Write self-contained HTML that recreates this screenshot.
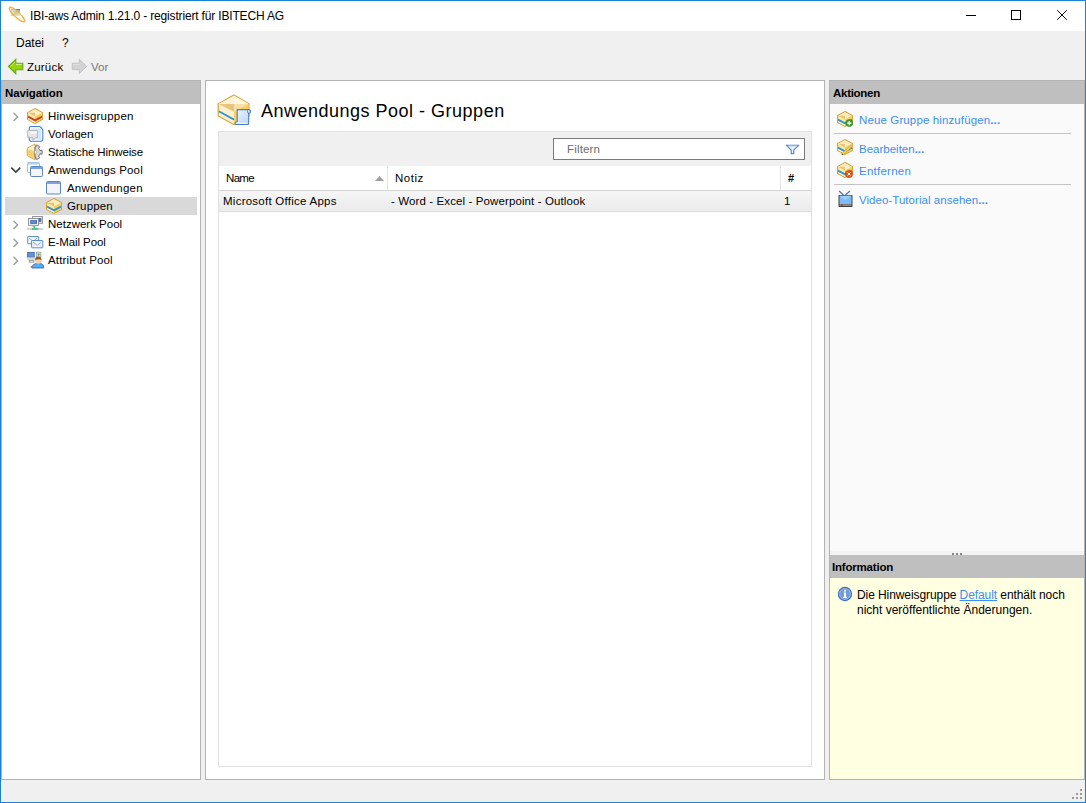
<!DOCTYPE html>
<html><head><meta charset="utf-8">
<style>
html,body{margin:0;padding:0;}
body{width:1086px;height:803px;position:relative;overflow:hidden;background:#f0f0f0;font-family:"Liberation Sans",sans-serif;color:#000;}
.a{position:absolute;display:block;}
.t{position:absolute;font-size:12px;line-height:15px;white-space:nowrap;}
.b{font-weight:bold;}
.lnk{color:#3a8ff5;}
</style></head><body>

<div class="a" style="left:0;top:0;width:1086px;height:1px;background:#1883d7"></div>
<div class="a" style="left:0;top:0;width:1px;height:803px;background:#1883d7"></div>
<div class="a" style="left:1085px;top:0;width:1px;height:803px;background:#1883d7"></div>
<div class="a" style="left:0;top:802px;width:1086px;height:1px;background:#1883d7"></div>
<div class="a" style="left:1px;top:1px;width:1084px;height:30px;background:#fff"></div>
<svg class="a" style="left:6px;top:4px" width="22" height="22" viewBox="0 0 22 22">
<defs><linearGradient id="sq" x1="0" y1="0" x2="0" y2="1"><stop offset="0" stop-color="#7d9fc6"/><stop offset="1" stop-color="#c9def3"/></linearGradient></defs>
<rect x="5" y="5" width="9" height="7" fill="url(#sq)"/>
<rect x="5" y="5" width="9" height="1" fill="#5f7fa6"/>
<path d="M7.8 11.5 L9.8 6.5 L11.8 11.5 M8.6 9.8 H11" fill="none" stroke="#a88512" stroke-width="1.2"/>
<ellipse cx="11" cy="10.6" rx="10.2" ry="2.7" transform="rotate(43 11 10.6)" fill="rgba(255,248,225,0.55)" stroke="#efb54c" stroke-width="1.3"/>
</svg>
<div class="t" style="left:30px;top:9px;font-size:12px;font-weight:400;color:#000;letter-spacing:-0.167px;">IBI-aws Admin 1.21.0 - registriert für IBITECH AG</div>
<div class="a" style="left:966px;top:15px;width:10px;height:1px;background:#000"></div>
<div class="a" style="left:1011px;top:10px;width:8px;height:8px;border:1px solid #000"></div>
<svg class="a" style="left:1056px;top:9px" width="12" height="12" viewBox="0 0 12 12"><path d="M1.2 1.2L10.8 10.8M10.8 1.2L1.2 10.8" stroke="#000" stroke-width="0.95"/></svg>
<div class="t" style="left:16px;top:36px;font-size:12px;font-weight:400;color:#000;letter-spacing:0.0px;">Datei</div>
<div class="t" style="left:62px;top:36px;font-size:12px;font-weight:400;color:#000;letter-spacing:0.0px;">?</div>
<svg class="a" style="left:6px;top:57px" width="19" height="19" viewBox="0 0 19 19">
<polygon points="2.5,9.5 9.8,2.3 9.8,6.3 16.8,6.3 16.8,12.8 9.8,12.8 9.8,16.7" fill="#97d40c" stroke="#66a812" stroke-width="1.1" stroke-linejoin="miter"/>
<path d="M10 7.4 H15.8" stroke="#d0f580" stroke-width="1"/><path d="M4.5 9.5 L9.2 4.8" stroke="#c0ee60" stroke-width="0.8"/>
</svg>
<div class="t" style="left:27px;top:60px;font-size:11.5px;font-weight:400;color:#000;letter-spacing:0.2px;">Zurück</div>
<svg class="a" style="left:70px;top:57px" width="19" height="19" viewBox="0 0 19 19">
<polygon points="16.6,9.4 9.3,2.2 9.3,6.2 2.3,6.2 2.3,12.6 9.3,12.6 9.3,16.6" fill="#d3d3d3" stroke="#c2c2c2" stroke-width="1"/><path d="M3.2 7.4 H9.8" stroke="#e2e2e2" stroke-width="0.9"/>
</svg>
<div class="t" style="left:91px;top:60px;font-size:11.5px;font-weight:400;color:#767676;letter-spacing:0.0px;">Vor</div>
<div class="a" style="left:1px;top:80px;width:198px;height:698px;border:1px solid #b3b3b3;background:#fff"></div>
<div class="a" style="left:2px;top:81px;width:198px;height:23px;background:#bfbfbf"></div>
<div class="t" style="left:5px;top:86px;font-size:11.5px;font-weight:700;color:#000;letter-spacing:-0.111px;">Navigation</div>
<div class="a" style="left:5px;top:197px;width:192px;height:18px;background:#d9d9d9"></div>
<svg class="a" style="left:11px;top:111px" width="10" height="12" viewBox="0 0 10 12"><path d="M2.5 1.8 L6.6 5.9 L2.5 10" fill="none" stroke="#a3a3a3" stroke-width="1.5"/></svg>
<svg class="a" style="left:27px;top:108px" width="16" height="16" viewBox="0 0 16 16"><polygon points="8,0.6 15.4,4.5 15.4,11.5 8,15.4 0.6,11.5 0.6,4.5" fill="#fde9a9" stroke="#d6a035" stroke-width="1.1"/><polygon points="8,1.2 14.8,4.8 8,8.4 1.2,4.8" fill="#fbeec4"/><polygon points="1.2,4.8 8,4.8 8,8.4" fill="#e9c471"/><polygon points="8,8.4 14.8,4.8 14.8,11.2 8,14.8" fill="#f6cf5a"/><polyline points="1.1,8.6 8,12.4 14.9,8.6" fill="none" stroke="#d73a28" stroke-width="1.8"/><polygon points="1.1,10 8,13.7 8,14.8 1.2,11.2" fill="#fdf3d0"/></svg>
<div class="t" style="left:48px;top:109px;font-size:11.5px;font-weight:400;color:#000;letter-spacing:0.231px;">Hinweisgruppen</div>
<svg class="a" style="left:26px;top:125px" width="18" height="18" viewBox="0 0 18 18">
<path d="M5 1.5 H13 Q14 1.5 15 2.5 L15.9 3.4 Q16.8 4.3 16.8 5.4 V14.6 Q16.8 16.3 15 16.3 H5 Q3.3 16.3 3.3 14.6 V3.2 Q3.3 1.5 5 1.5 Z" fill="#fff" stroke="#4581d2" stroke-width="1.1"/>
<rect x="5.2" y="3.4" width="9.8" height="11.2" fill="#d3e5fb"/>
<path d="M1.6 5.6 H11.4 V12.6 H9.6 L6.9 15.2 L6.9 12.6 H1.6 Z" fill="#e6e6e6" stroke="#b3b3b3" stroke-width="0.9"/>
<rect x="2.2" y="6.2" width="8.6" height="2.5" fill="#f3f3f3"/>
</svg>
<div class="t" style="left:48px;top:127px;font-size:11.5px;font-weight:400;color:#000;letter-spacing:0.0px;">Vorlagen</div>
<svg class="a" style="left:26px;top:143px" width="18" height="18" viewBox="0 0 18 18">
<polygon points="9,1 1.2,5.2 1.2,12.6 9,16.8" fill="#fbe7ae" stroke="#d9a844" stroke-width="1"/>
<polygon points="8.5,5 2,7.5 2,12 8.5,15.5" fill="#f4cf70"/>
<polygon points="8.5,2 2,5.6 8.5,8.5" fill="#fdf2d2"/>
<path d="M9 4.00 L9.00 4.00 L9.09 4.00 L9.18 4.00 L9.27 4.01 L9.36 4.01 L9.45 4.02 L9.54 4.03 L9.63 4.04 L9.72 4.05 L10.14 1.99 L10.27 2.01 L10.39 2.03 L10.52 2.06 L10.64 2.09 L10.77 2.12 L10.89 2.15 L11.01 2.18 L11.13 2.22 L11.26 2.26 L11.38 2.30 L11.50 2.34 L11.62 2.38 L11.73 2.43 L11.85 2.48 L11.97 2.53 L12.09 2.58 L12.20 2.64 L12.31 2.70 L12.43 2.75 L12.54 2.82 L12.65 2.88 L12.76 2.94 L12.87 3.01 L12.98 3.08 L13.08 3.15 L13.19 3.22 L13.29 3.29 L13.39 3.37 L13.49 3.45 L13.59 3.53 L13.69 3.61 L13.79 3.69 L12.48 5.34 L12.55 5.40 L12.61 5.46 L12.68 5.52 L12.74 5.59 L12.80 5.65 L12.86 5.72 L12.92 5.79 L12.98 5.86 L13.04 5.93 L13.10 6.00 L13.15 6.07 L13.21 6.14 L13.26 6.22 L13.31 6.29 L13.36 6.37 L13.41 6.44 L13.46 6.52 L13.50 6.60 L13.55 6.68 L13.59 6.76 L13.63 6.84 L13.67 6.92 L13.71 7.00 L13.75 7.08 L13.79 7.17 L13.82 7.25 L13.85 7.34 L13.89 7.42 L13.92 7.51 L13.95 7.59 L13.97 7.68 L16.02 7.19 L16.05 7.31 L16.08 7.43 L16.11 7.56 L16.14 7.68 L16.17 7.81 L16.19 7.93 L16.21 8.06 L16.23 8.18 L16.25 8.31 L16.26 8.44 L16.27 8.56 L16.28 8.69 L16.29 8.82 L16.30 8.95 L16.30 9.07 L16.30 9.20 L16.30 9.33 L16.30 9.45 L16.29 9.58 L16.28 9.71 L16.27 9.84 L16.26 9.96 L16.25 10.09 L16.23 10.22 L16.21 10.34 L16.19 10.47 L16.17 10.59 L16.14 10.72 L16.11 10.84 L16.08 10.97 L16.05 11.09 L16.02 11.21 L13.97 10.72 L13.95 10.81 L13.92 10.89 L13.89 10.98 L13.85 11.06 L13.82 11.15 L13.79 11.23 L13.75 11.32 L13.71 11.40 L13.67 11.48 L13.63 11.56 L13.59 11.64 L13.55 11.72 L13.50 11.80 L13.46 11.88 L13.41 11.96 L13.36 12.03 L13.31 12.11 L13.26 12.18 L13.21 12.26 L13.15 12.33 L13.10 12.40 L13.04 12.47 L12.98 12.54 L12.92 12.61 L12.86 12.68 L12.80 12.75 L12.74 12.81 L12.68 12.88 L12.61 12.94 L12.55 13.00 L12.48 13.06 L13.79 14.71 L13.69 14.79 L13.59 14.87 L13.49 14.95 L13.39 15.03 L13.29 15.11 L13.19 15.18 L13.08 15.25 L12.98 15.32 L12.87 15.39 L12.76 15.46 L12.65 15.52 L12.54 15.58 L12.43 15.65 L12.31 15.70 L12.20 15.76 L12.09 15.82 L11.97 15.87 L11.85 15.92 L11.73 15.97 L11.62 16.02 L11.50 16.06 L11.38 16.10 L11.26 16.14 L11.13 16.18 L11.01 16.22 L10.89 16.25 L10.77 16.28 L10.64 16.31 L10.52 16.34 L10.39 16.37 L10.27 16.39 L10.14 16.41 L9.72 14.35 L9.63 14.36 L9.54 14.37 L9.45 14.38 L9.36 14.39 L9.27 14.39 L9.18 14.40 L9.09 14.40 L9.00 14.40 L9 14.40 Z" fill="#d9d9d9" stroke="#5e5e5e" stroke-width="0.9" stroke-linejoin="round"/>
<path d="M9 7.4 A1.8 1.8 0 0 1 9 11" fill="#fff" stroke="#8a8a8a" stroke-width="0.5"/>
</svg>
<div class="t" style="left:48px;top:145px;font-size:11.5px;font-weight:400;color:#000;letter-spacing:-0.118px;">Statische Hinweise</div>
<svg class="a" style="left:10px;top:165px" width="12" height="10" viewBox="0 0 12 10"><path d="M1.3 2.6 L5.8 7.1 L10.3 2.6" fill="none" stroke="#3c3c3c" stroke-width="1.5"/></svg>
<svg class="a" style="left:26px;top:161px" width="18" height="18" viewBox="0 0 18 18">
<rect x="1.5" y="1.5" width="12" height="10" rx="1" fill="#fff" stroke="#9fbde6" stroke-width="1"/>
<rect x="1.5" y="1.5" width="12" height="2" fill="#b6cdee"/>
<rect x="4.5" y="5.5" width="12" height="10" rx="1" fill="#f4f6fb" stroke="#5a86c8" stroke-width="1"/>
<rect x="5" y="6" width="11" height="2" fill="#7ea3dc"/>
</svg>
<div class="t" style="left:48px;top:163px;font-size:11.5px;font-weight:400;color:#000;letter-spacing:0.143px;">Anwendungs Pool</div>
<svg class="a" style="left:45px;top:180px" width="17" height="16" viewBox="0 0 17 16">
<rect x="1.5" y="1.5" width="14" height="12.5" rx="1" fill="#f3f5fb" stroke="#5a86c8" stroke-width="1"/>
<rect x="2" y="2" width="13" height="2" fill="#7ea3dc"/>
</svg>
<div class="t" style="left:67px;top:181px;font-size:11.5px;font-weight:400;color:#000;letter-spacing:0.2px;">Anwendungen</div>
<svg class="a" style="left:46px;top:198px" width="16" height="16" viewBox="0 0 16 16"><polygon points="8,0.6 15.4,4.5 15.4,11.5 8,15.4 0.6,11.5 0.6,4.5" fill="#fde9a9" stroke="#d6a035" stroke-width="1.1"/><polygon points="8,1.2 14.8,4.8 8,8.4 1.2,4.8" fill="#fbeec4"/><polygon points="1.2,4.8 8,4.8 8,8.4" fill="#e9c471"/><polygon points="8,8.4 14.8,4.8 14.8,11.2 8,14.8" fill="#f6cf5a"/><polyline points="1.1,8.6 8,12.4 14.9,8.6" fill="none" stroke="#2e97d6" stroke-width="1.8"/><polygon points="1.1,10 8,13.7 8,14.8 1.2,11.2" fill="#fdf3d0"/></svg>
<div class="t" style="left:67px;top:199px;font-size:11.5px;font-weight:400;color:#000;letter-spacing:0.167px;">Gruppen</div>
<svg class="a" style="left:11px;top:219px" width="10" height="12" viewBox="0 0 10 12"><path d="M2.5 1.8 L6.6 5.9 L2.5 10" fill="none" stroke="#a3a3a3" stroke-width="1.5"/></svg>
<svg class="a" style="left:26px;top:215px" width="18" height="18" viewBox="0 0 18 18">
<rect x="6.6" y="1.5" width="10" height="6.8" fill="#f2f2f2" stroke="#8c8c8c" stroke-width="0.9"/>
<rect x="12.2" y="3" width="3.2" height="4" fill="#4272bb"/>
<rect x="2.5" y="3.5" width="10" height="6.8" fill="#f4f4f4" stroke="#8c8c8c" stroke-width="0.9"/>
<rect x="4.2" y="5.1" width="6.8" height="3.8" fill="#3e6ebd"/>
<rect x="5.2" y="6.2" width="4.8" height="1.5" fill="#6f98d6"/>
<rect x="5.5" y="10.4" width="4" height="1" fill="#a8a8a8"/>
<rect x="7.5" y="11" width="1.8" height="2.2" fill="#4fbf89"/>
<rect x="1" y="13" width="16" height="1.8" fill="#c9d0d6"/>
<rect x="6" y="13" width="6.2" height="1.8" fill="#4fbf89"/>
</svg>
<div class="t" style="left:48px;top:217px;font-size:11.5px;font-weight:400;color:#000;letter-spacing:0.0px;">Netzwerk Pool</div>
<svg class="a" style="left:11px;top:237px" width="10" height="12" viewBox="0 0 10 12"><path d="M2.5 1.8 L6.6 5.9 L2.5 10" fill="none" stroke="#a3a3a3" stroke-width="1.5"/></svg>
<svg class="a" style="left:26px;top:233px" width="18" height="18" viewBox="0 0 18 18">
<rect x="1.7" y="3.5" width="11" height="7.2" rx="0.5" fill="#f3f7fd" stroke="#5a8ed2" stroke-width="1"/>
<path d="M3 5 L7.2 8.3 L11.4 5" fill="none" stroke="#88acdf" stroke-width="0.9"/>
<rect x="5.6" y="7.5" width="11.2" height="7.3" rx="0.5" fill="#f3f7fd" stroke="#5a8ed2" stroke-width="1"/>
<path d="M7 9 L11.2 12.4 L15.4 9" fill="none" stroke="#7fa6dd" stroke-width="0.9"/>
<path d="M7 13.5 L9.5 11.5 M15.4 13.5 L12.9 11.5" fill="none" stroke="#b5cbec" stroke-width="0.7"/>
</svg>
<div class="t" style="left:48px;top:235px;font-size:11.5px;font-weight:400;color:#000;letter-spacing:-0.1px;">E-Mail Pool</div>
<svg class="a" style="left:11px;top:255px" width="10" height="12" viewBox="0 0 10 12"><path d="M2.5 1.8 L6.6 5.9 L2.5 10" fill="none" stroke="#a3a3a3" stroke-width="1.5"/></svg>
<svg class="a" style="left:26px;top:251px" width="18" height="18" viewBox="0 0 18 18">
<rect x="1" y="1" width="7.8" height="5.6" fill="#4a77bd"/>
<rect x="2" y="2" width="5.8" height="3.6" fill="#6792d0"/>
<rect x="1" y="6.6" width="7.8" height="2" fill="#d6d6d6"/>
<rect x="3.2" y="9.3" width="4.6" height="1.8" fill="none" stroke="#8e8e8e" stroke-width="0.9"/>
<rect x="10.3" y="1.2" width="4.6" height="5" fill="#e4e4e4" stroke="#8e8e8e" stroke-width="0.7"/>
<circle cx="12.6" cy="3.6" r="1.1" fill="#3fae3f"/>
<path d="M5.8 17 Q6.3 12.3 12.3 12.3 Q18.2 12.3 17.8 17 Z" fill="#52b0f6" stroke="#2a56c6" stroke-width="0.8"/>
<ellipse cx="12.3" cy="9.9" rx="3.2" ry="2.9" fill="#f5d2b2"/>
<path d="M9 9.6 Q8.8 5.8 12.3 5.6 Q15.8 5.8 15.6 9.4 Q13.5 7.8 12 8.6 Q10.5 8.2 9 9.6Z" fill="#9b5b20"/>
<rect x="4.8" y="15" width="1.6" height="2" fill="#e07a20"/>
</svg>
<div class="t" style="left:48px;top:253px;font-size:11.5px;font-weight:400;color:#000;letter-spacing:0.167px;">Attribut Pool</div>
<div class="a" style="left:205px;top:80px;width:618px;height:698px;border:1px solid #b3b3b3;background:#fff"></div>
<svg class="a" style="left:216px;top:93px" width="36" height="34" viewBox="0 0 36 34">
<polygon points="18,2 33,10.8 33,22.8 18,31.6 2.2,23 2.2,10.8" fill="#fbe6ae" stroke="#d9a43c" stroke-width="1.2"/>
<polygon points="18,2.8 32.4,11 18,19 3,11" fill="#f7e0a8"/>
<polygon points="3,11 18,11 18,19" fill="#e8c57e"/>
<polygon points="18,2.8 18,11 32.4,11" fill="#fff6de"/>
<polygon points="3,11 18,2.8 18,11" fill="#fdf2d8"/>
<polygon points="18,19 32.4,11 32.4,22.5 18,30.8" fill="#f6cf62"/>
<polygon points="3,11.5 18,19 18,30.8 3,22.6" fill="#fdf0cb"/>
<polyline points="2.8,18.2 18,26.6" fill="none" stroke="#2d97d3" stroke-width="1.8"/>
<defs><linearGradient id="scr" x1="0" y1="0" x2="1" y2="1"><stop offset="0" stop-color="#eef5fe"/><stop offset="1" stop-color="#b9d3f5"/></linearGradient></defs>
<path d="M21.2 16.6 H32.2 Q34.6 16.6 34.6 18.6 Q34.6 20.4 32.7 20.4 V30.2 Q32.7 31.5 31.4 31.5 H20.3 Q18.9 31.5 19.1 30.1 Q19.4 28.8 21.2 28.8 Z" fill="url(#scr)" stroke="#4a7bc6" stroke-width="1.1"/>
<path d="M32.2 16.6 Q31 17.5 31.5 19 Q32 20.4 32.7 20.4" fill="none" stroke="#4a7bc6" stroke-width="0.8"/>
<path d="M20.5 30.2 H31.5" stroke="#fff" stroke-width="0.9"/>
</svg>
<div class="t" style="left:261px;top:104px;font-size:18px;font-weight:400;color:#000;letter-spacing:0.5px;">Anwendungs Pool - Gruppen</div>
<div class="a" style="left:218px;top:131px;width:592px;height:634px;border:1px solid #e1e1e1;background:#fff"></div>
<div class="a" style="left:219px;top:132px;width:592px;height:34px;background:#f0f0f0"></div>
<div class="a" style="left:553px;top:138px;width:250px;height:20px;border:1px solid #7a7a7a;background:#fff"></div>
<div class="t" style="left:567px;top:142px;font-size:11.5px;font-weight:400;color:#6d6d6d;letter-spacing:0.167px;">Filtern</div>
<svg class="a" style="left:785px;top:144px" width="15" height="11" viewBox="0 0 15 11">
<path d="M1.2 1.2 H13.8 L8.8 6.2 V9.8 H6.2 V6.2 Z" fill="#e7f0fd" stroke="#4a7fd0" stroke-width="1.1" stroke-linejoin="round"/>
<path d="M2.5 1.8 H12.5" stroke="#9bbbe8" stroke-width="1"/>
</svg>
<div class="a" style="left:219px;top:190px;width:592px;height:1px;background:#d5d5d5"></div>
<div class="a" style="left:387px;top:166px;width:1px;height:24px;background:#e5e5e5"></div>
<div class="a" style="left:780px;top:166px;width:1px;height:24px;background:#e5e5e5"></div>
<div class="t" style="left:226px;top:171px;font-size:11.5px;font-weight:400;color:#000;letter-spacing:-0.667px;">Name</div>
<svg class="a" style="left:374px;top:175px" width="11" height="7" viewBox="0 0 11 7"><polygon points="1,6 5.5,1 10,6" fill="#9e9e9e"/></svg>
<div class="t" style="left:395px;top:171px;font-size:11.5px;font-weight:400;color:#000;letter-spacing:0.5px;">Notiz</div>
<div class="t" style="left:788px;top:171px;font-size:11px;font-weight:700;color:#000;letter-spacing:0.0px;">#</div>
<div class="a" style="left:219px;top:191px;width:592px;height:20px;background:linear-gradient(#f6f6f6,#ebebeb)"></div>
<div class="a" style="left:219px;top:211px;width:592px;height:1px;background:#dcdcdc"></div>
<div class="t" style="left:223px;top:194px;font-size:11.5px;font-weight:400;color:#000;letter-spacing:0.25px;">Microsoft Office Apps</div>
<div class="t" style="left:391px;top:194px;font-size:11.5px;font-weight:400;color:#000;letter-spacing:0.111px;">- Word - Excel - Powerpoint - Outlook</div>
<div class="t" style="left:784px;top:194px;font-size:11.5px;font-weight:400;color:#000;letter-spacing:0.0px;">1</div>
<div class="a" style="left:829px;top:80px;width:254px;height:698px;border:1px solid #b3b3b3;background:#fafafa"></div>
<div class="a" style="left:830px;top:81px;width:254px;height:23px;background:#bfbfbf"></div>
<div class="t" style="left:833px;top:86px;font-size:11.5px;font-weight:700;color:#000;letter-spacing:-0.286px;">Aktionen</div>
<svg class="a" style="left:837px;top:111px" width="16" height="16" viewBox="0 0 16 16"><polygon points="8,0.6 15.4,4.5 15.4,11.5 8,15.4 0.6,11.5 0.6,4.5" fill="#fde9a9" stroke="#d6a035" stroke-width="1.1"/><polygon points="8,1.2 14.8,4.8 8,8.4 1.2,4.8" fill="#fbeec4"/><polygon points="1.2,4.8 8,4.8 8,8.4" fill="#e9c471"/><polygon points="8,8.4 14.8,4.8 14.8,11.2 8,14.8" fill="#f6cf5a"/><polyline points="1.1,8.6 8,12.4 14.9,8.6" fill="none" stroke="#2e97d6" stroke-width="1.8"/><polygon points="1.1,10 8,13.7 8,14.8 1.2,11.2" fill="#fdf3d0"/><circle cx="12.3" cy="12.1" r="3.5" fill="#46a032" stroke="#2a7a1a" stroke-width="0.6"/><path d="M12.3 10v4.2M10.2 12.1h4.2" stroke="#fff" stroke-width="1.2"/></svg>
<div class="t" style="left:859px;top:113px;font-size:11.5px;font-weight:400;color:#3a8ff5;letter-spacing:0.125px;">Neue Gruppe hinzufügen<b>...</b></div>
<div class="a" style="left:834px;top:133px;width:237px;height:1px;background:#c4c4c4"></div>
<svg class="a" style="left:837px;top:139px" width="16" height="16" viewBox="0 0 16 16"><polygon points="8,0.6 15.4,4.5 15.4,11.5 8,15.4 0.6,11.5 0.6,4.5" fill="#fde9a9" stroke="#d6a035" stroke-width="1.1"/><polygon points="8,1.2 14.8,4.8 8,8.4 1.2,4.8" fill="#fbeec4"/><polygon points="1.2,4.8 8,4.8 8,8.4" fill="#e9c471"/><polygon points="8,8.4 14.8,4.8 14.8,11.2 8,14.8" fill="#f6cf5a"/><polyline points="1.1,8.6 8,12.4 14.9,8.6" fill="none" stroke="#2e97d6" stroke-width="1.8"/><polygon points="1.1,10 8,13.7 8,14.8 1.2,11.2" fill="#fdf3d0"/><path d="M5 14.5 L13.5 6 L15 7.5 L6.5 16 Z" fill="#f2d84a" stroke="#c99a30" stroke-width="0.7"/><path d="M5 14.5 L6.5 16 L4.2 16.5Z" fill="#6b4a20"/><circle cx="14.3" cy="6.7" r="1.3" fill="#f4b0a0"/></svg>
<div class="t" style="left:859px;top:142px;font-size:11.5px;font-weight:400;color:#3a8ff5;letter-spacing:0.0px;">Bearbeiten<b>...</b></div>
<svg class="a" style="left:837px;top:162px" width="16" height="16" viewBox="0 0 16 16"><polygon points="8,0.6 15.4,4.5 15.4,11.5 8,15.4 0.6,11.5 0.6,4.5" fill="#fde9a9" stroke="#d6a035" stroke-width="1.1"/><polygon points="8,1.2 14.8,4.8 8,8.4 1.2,4.8" fill="#fbeec4"/><polygon points="1.2,4.8 8,4.8 8,8.4" fill="#e9c471"/><polygon points="8,8.4 14.8,4.8 14.8,11.2 8,14.8" fill="#f6cf5a"/><polyline points="1.1,8.6 8,12.4 14.9,8.6" fill="none" stroke="#2e97d6" stroke-width="1.8"/><polygon points="1.1,10 8,13.7 8,14.8 1.2,11.2" fill="#fdf3d0"/><circle cx="12" cy="12" r="3.7" fill="#e4581b" stroke="#c84410" stroke-width="0.6"/><path d="M10.6 10.6l2.8 2.8M13.4 10.6l-2.8 2.8" stroke="#fff" stroke-width="1"/></svg>
<div class="t" style="left:859px;top:164px;font-size:11.5px;font-weight:400;color:#3a8ff5;letter-spacing:0.25px;">Entfernen</div>
<div class="a" style="left:834px;top:184px;width:237px;height:1px;background:#c4c4c4"></div>
<svg class="a" style="left:837px;top:190px" width="17" height="18" viewBox="0 0 17 18">
<path d="M2 1 L6.5 5 M13 1 L8.5 5" stroke="#5877a8" stroke-width="1.4"/>
<rect x="1.5" y="5" width="14" height="12" rx="0.8" fill="#404040"/>
<rect x="2.5" y="5.8" width="12" height="8.2" fill="#7cbdf5"/>
<polygon points="2.5,5.8 14.5,5.8 8,10" fill="#9fd0fa"/>
<rect x="2.5" y="14.2" width="12" height="1.8" fill="#8a8a8a"/>
<rect x="4" y="14.4" width="1.8" height="1.4" fill="#e02020"/>
</svg>
<div class="t" style="left:859px;top:193px;font-size:11.5px;font-weight:400;color:#3a8ff5;letter-spacing:0.042px;">Video-Tutorial ansehen<b>...</b></div>
<div class="a" style="left:830px;top:551px;width:254px;height:4px;background:#f3f3f3"></div>
<div class="a" style="left:952px;top:553px;width:2px;height:2px;background:#858585"></div>
<div class="a" style="left:956px;top:553px;width:2px;height:2px;background:#858585"></div>
<div class="a" style="left:960px;top:553px;width:2px;height:2px;background:#858585"></div>
<div class="a" style="left:830px;top:555px;width:254px;height:23px;background:#bfbfbf"></div>
<div class="t" style="left:832px;top:560px;font-size:11.5px;font-weight:700;color:#000;letter-spacing:-0.2px;">Information</div>
<div class="a" style="left:830px;top:578px;width:254px;height:201px;background:#ffffe2"></div>
<svg class="a" style="left:837px;top:586px" width="16" height="16" viewBox="0 0 16 16">
<circle cx="8" cy="8" r="6.6" fill="#6f9ad6" stroke="#3a6fc4" stroke-width="1.1"/>
<circle cx="8" cy="8" r="5.3" fill="none" stroke="#a9c5ec" stroke-width="0.8"/>
<rect x="7" y="4" width="2" height="1.6" fill="#fff"/>
<path d="M6.6 6.6 H9 V10.8 H9.8 V12 H6.2 V10.8 H7 V7.6 H6.6Z" fill="#fff"/>
</svg>
<div class="t" style="left:857px;top:588px;font-size:12px;font-weight:400;color:#000;letter-spacing:-0.081px;">Die Hinweisgruppe <span style="color:#3a8ff5;text-decoration:underline">Default</span> enthält noch</div>
<div class="t" style="left:857px;top:603px;font-size:12px;font-weight:400;color:#000;letter-spacing:0.0px;">nicht veröffentlichte Änderungen.</div>
<div class="a" style="left:1080px;top:789px;width:2px;height:2px;background:#9a9a9a"></div>
<div class="a" style="left:1076px;top:793px;width:2px;height:2px;background:#9a9a9a"></div>
<div class="a" style="left:1080px;top:793px;width:2px;height:2px;background:#9a9a9a"></div>
<div class="a" style="left:1072px;top:797px;width:2px;height:2px;background:#9a9a9a"></div>
<div class="a" style="left:1076px;top:797px;width:2px;height:2px;background:#9a9a9a"></div>
<div class="a" style="left:1080px;top:797px;width:2px;height:2px;background:#9a9a9a"></div>
</body></html>
